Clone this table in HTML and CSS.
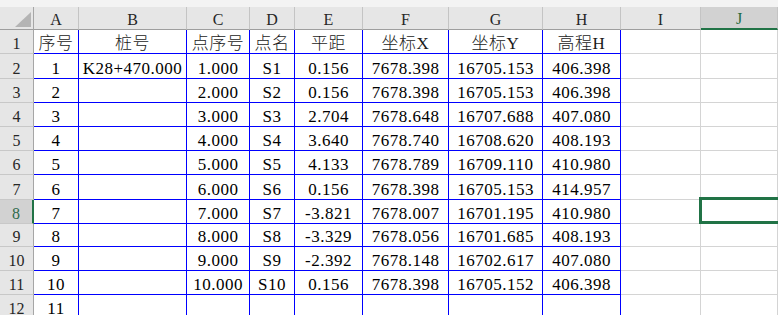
FILE: index.html
```html
<!DOCTYPE html>
<html lang="zh-CN">
<head>
<meta charset="utf-8">
<title>Sheet</title>
<link rel="stylesheet" href="styles.css">
</head>
<body>
<div class="strip"></div>
<div class="sheet">
  <div class="corner"><div class="tri"></div></div>
  <div class="hd">A</div><div class="hd">B</div><div class="hd">C</div><div class="hd">D</div><div class="hd">E</div><div class="hd">F</div><div class="hd">G</div><div class="hd">H</div><div class="hd">I</div><div class="hd hd-sel">J</div>

  <div class="rh">1</div>
  <div class="c b zh">序号</div><div class="c b zh">桩号</div><div class="c b zh">点序号</div><div class="c b zh">点名</div><div class="c b zh">平距</div><div class="c b zh">坐标X</div><div class="c b zh">坐标Y</div><div class="c b zh">高程H</div><div class="c"></div><div class="c"></div>

  <div class="rh">2</div>
  <div class="c b">1</div><div class="c b">K28+470.000</div><div class="c b">1.000</div><div class="c b">S1</div><div class="c b">0.156</div><div class="c b">7678.398</div><div class="c b">16705.153</div><div class="c b">406.398</div><div class="c"></div><div class="c"></div>

  <div class="rh">3</div>
  <div class="c b">2</div><div class="c b"></div><div class="c b">2.000</div><div class="c b">S2</div><div class="c b">0.156</div><div class="c b">7678.398</div><div class="c b">16705.153</div><div class="c b">406.398</div><div class="c"></div><div class="c"></div>

  <div class="rh">4</div>
  <div class="c b">3</div><div class="c b"></div><div class="c b">3.000</div><div class="c b">S3</div><div class="c b">2.704</div><div class="c b">7678.648</div><div class="c b">16707.688</div><div class="c b">407.080</div><div class="c"></div><div class="c"></div>

  <div class="rh">5</div>
  <div class="c b">4</div><div class="c b"></div><div class="c b">4.000</div><div class="c b">S4</div><div class="c b">3.640</div><div class="c b">7678.740</div><div class="c b">16708.620</div><div class="c b">408.193</div><div class="c"></div><div class="c"></div>

  <div class="rh">6</div>
  <div class="c b">5</div><div class="c b"></div><div class="c b">5.000</div><div class="c b">S5</div><div class="c b">4.133</div><div class="c b">7678.789</div><div class="c b">16709.110</div><div class="c b">410.980</div><div class="c"></div><div class="c"></div>

  <div class="rh">7</div>
  <div class="c b">6</div><div class="c b"></div><div class="c b">6.000</div><div class="c b">S6</div><div class="c b">0.156</div><div class="c b">7678.398</div><div class="c b">16705.153</div><div class="c b">414.957</div><div class="c"></div><div class="c"></div>

  <div class="rh rh-sel">8</div>
  <div class="c b">7</div><div class="c b"></div><div class="c b">7.000</div><div class="c b">S7</div><div class="c b">-3.821</div><div class="c b">7678.007</div><div class="c b">16701.195</div><div class="c b">410.980</div><div class="c"></div><div class="c cur"><div class="selbox"></div></div>

  <div class="rh">9</div>
  <div class="c b">8</div><div class="c b"></div><div class="c b">8.000</div><div class="c b">S8</div><div class="c b">-3.329</div><div class="c b">7678.056</div><div class="c b">16701.685</div><div class="c b">408.193</div><div class="c"></div><div class="c"></div>

  <div class="rh">10</div>
  <div class="c b">9</div><div class="c b"></div><div class="c b">9.000</div><div class="c b">S9</div><div class="c b">-2.392</div><div class="c b">7678.148</div><div class="c b">16702.617</div><div class="c b">407.080</div><div class="c"></div><div class="c"></div>

  <div class="rh">11</div>
  <div class="c b">10</div><div class="c b"></div><div class="c b">10.000</div><div class="c b">S10</div><div class="c b">0.156</div><div class="c b">7678.398</div><div class="c b">16705.152</div><div class="c b">406.398</div><div class="c"></div><div class="c"></div>

  <div class="rh">12</div>
  <div class="c b">11</div><div class="c b"></div><div class="c b"></div><div class="c b"></div><div class="c b"></div><div class="c b"></div><div class="c b"></div><div class="c b"></div><div class="c"></div><div class="c"></div>
</div>
</body>
</html>
```

FILE: styles.css
```css
html, body {
  margin: 0;
  padding: 0;
  background: #ffffff;
  overflow: hidden;
}
body {
  width: 778px;
  height: 315px;
}
.strip {
  height: 7px;
  background: #f3f3f3;
}
.sheet {
  display: grid;
  grid-template-columns: 34px 45px 108px 63px 45px 68px 86px 94px 78px 80px 1fr;
  grid-template-rows: 23px 24px 25px 24px 24px 24px 24px 25px 24px 23px 24px 24px 24px;
  font-family: "Liberation Serif", "Noto Sans CJK SC", serif;
}
.sheet > div {
  box-sizing: border-box;
  display: flex;
  justify-content: center;
  align-items: flex-end;
  white-space: nowrap;
}
.corner {
  background: #e6e6e6;
  border-right: 1px solid #a6a6a6;
  border-bottom: 1px solid #9e9e9e;
  justify-content: flex-end !important;
  padding: 0 2px 2px 0;
}
.tri {
  width: 16px;
  height: 15px;
  background: #b4b4b4;
  clip-path: polygon(100% 0, 100% 100%, 0 100%);
}
.hd {
  background: #e6e6e6;
  border-right: 1px solid #c4c4c4;
  border-bottom: 1px solid #9e9e9e;
  font-size: 16px;
  line-height: 18px;
  color: #262626;
}
.hd-sel {
  background: #d2d2d2;
  border-bottom: 2px solid #217346;
  color: #1e6b40;
}
.rh {
  background: #e6e6e6;
  border-right: 1px solid #a6a6a6;
  border-bottom: 1px solid #c8c8c8;
  font-size: 16px;
  line-height: 18px;
  color: #262626;
}
.rh-sel {
  background: #d2d2d2;
  border-right: 2px solid #217346;
  color: #2e6b4a;
}
.c {
  border-right: 1px solid #d4d4d4;
  border-bottom: 1px solid #d4d4d4;
  font-size: 17px;
  line-height: 19px;
  letter-spacing: 0.5px;
  color: #000000;
}
.c.b {
  border-right-color: #0000ff;
  border-bottom-color: #0000ff;
}
.c.zh {
  font-weight: 300;
  color: #1a1a1a;
}
.cur {
  position: relative;
}
.selbox {
  position: absolute;
  left: -2px;
  top: -3px;
  width: 100px;
  height: 27px;
  box-sizing: border-box;
  border: 3px solid #217346;
}
```
